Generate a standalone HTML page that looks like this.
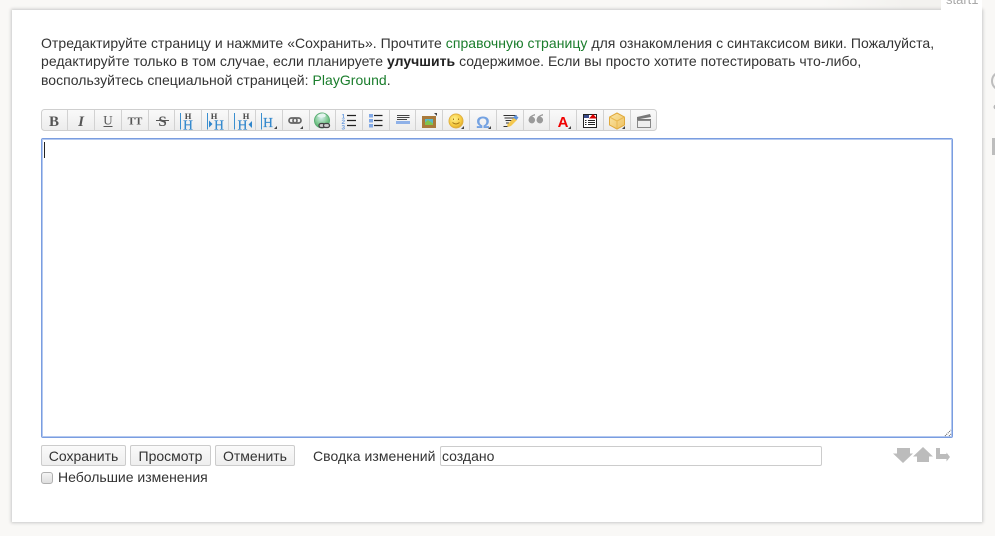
<!DOCTYPE html>
<html lang="ru"><head><meta charset="utf-8"><title>start1</title>
<style>
html,body{margin:0;padding:0}
body{width:995px;height:536px;overflow:hidden;background:#f9f8f6;position:relative;font:14px/20px "Liberation Sans",Arial,sans-serif;color:#333}
.a{position:absolute;white-space:nowrap}
#panel{left:12px;top:10px;width:970px;height:512px;background:#fff;box-shadow:0 0 3px 1px #c9c9c9}
#tab{left:941px;top:0;width:41px;height:11px;background:#fff;overflow:hidden}
#tab span{position:absolute;left:5px;top:-10px;color:#a8a8a8;font-size:13px;line-height:20px}
#tabl{left:820px;top:0;width:121px;height:10px;background:linear-gradient(to right,#f9f8f6,#f3f2ef 70%)}
.l{left:41px}
a{color:#1a7d2c;text-decoration:none}
b{color:#222}
#ta{left:41px;top:138px;width:910px;height:298px;border:1px solid #7a9de0;border-radius:2px;background:#fff;box-shadow:inset 0 0 0 1px #b4c9f0}
#caret{left:44px;top:142px;width:1px;height:16px;background:#222}
.btn{top:445px;height:19px;border:1px solid #ccc;border-radius:2px;background:linear-gradient(#fafafa,#eeeeee);text-align:center;line-height:20px;color:#333;box-sizing:content-box}
#sum{left:440px;top:446px;height:18px;border:1px solid #ccc;border-radius:2px;padding-left:1px;box-sizing:content-box;width:379px;line-height:19px;background:#fff}
#cb{left:41px;top:472px;width:10px;height:10px;border:1px solid #b0b0b0;border-radius:3px;background:linear-gradient(#f4f4f4,#dedede)}
svg{position:absolute;left:0;top:0}
</style></head><body>
<div class="a" id="tabl"></div>
<div class="a" id="panel"></div>
<div class="a" id="tab"><span>start1</span></div>

<div class="a l" style="top:33px;letter-spacing:.04px">Отредактируйте страницу и нажмите «Сохранить». Прочтите <a href="#">справочную страницу</a> для ознакомления с синтаксисом вики. Пожалуйста,</div>
<div class="a l" style="top:51px;letter-spacing:.03px">редактируйте только в том случае, если планируете <b>улучшить</b> содержимое. Если вы просто хотите потестировать что-либо,</div>
<div class="a l" style="top:70px;letter-spacing:.03px">воспользуйтесь специальной страницей: <a href="#">PlayGround</a>.</div>

<div class="a" id="ta"></div>
<div class="a" id="caret"></div>

<div class="a btn" style="left:41px;width:83px">Сохранить</div>
<div class="a btn" style="left:130px;width:79px">Просмотр</div>
<div class="a btn" style="left:215px;width:78px">Отменить</div>
<div class="a" style="left:313px;top:446px;letter-spacing:.05px">Сводка изменений</div>
<div class="a" id="sum">создано</div>
<div class="a" id="cb"></div>
<div class="a" style="left:58px;top:467px">Небольшие изменения</div>

<svg width="995" height="536" viewBox="0 0 995 536">
<defs><linearGradient id="g" x1="0" y1="0" x2="0" y2="1"><stop offset="0" stop-color="#fafafa"/><stop offset="1" stop-color="#ececec"/></linearGradient>
<radialGradient id="sm" cx=".4" cy=".35" r=".7"><stop offset="0" stop-color="#fff08a"/><stop offset=".7" stop-color="#f5c83c"/><stop offset="1" stop-color="#d9a028"/></radialGradient>
<radialGradient id="gl" cx=".45" cy=".3" r=".75"><stop offset="0" stop-color="#d8eef0"/><stop offset=".6" stop-color="#7cc88e"/><stop offset="1" stop-color="#46a862"/></radialGradient>
<linearGradient id="bx" x1="0" y1="0" x2="1" y2="1"><stop offset="0" stop-color="#fbe7a8"/><stop offset="1" stop-color="#eec060"/></linearGradient></defs>

<!-- toolbar -->
<rect x="41.5" y="109.5" width="615" height="21" rx="3" fill="url(#g)" stroke="#cfcfcf"/>
<path d="M67.5 110v20M94.5 110v20M121.5 110v20M148.5 110v20M174.5 110v20M201.5 110v20M228.5 110v20M255.5 110v20M282.5 110v20M309.5 110v20M335.5 110v20M362.5 110v20M389.5 110v20M415.5 110v20M442.5 110v20M469.5 110v20M496.5 110v20M523.5 110v20M549.5 110v20M576.5 110v20M603.5 110v20M630.5 110v20" stroke="#d2d2d2" fill="none"/>

<g font-family="Liberation Serif,serif" fill="#555">
<text x="54" y="126" font-size="15" font-weight="bold" text-anchor="middle">B</text>
<text x="81" y="126" font-size="15" font-weight="bold" font-style="italic" text-anchor="middle">I</text>
<text x="108" y="124.500" font-size="13" text-anchor="middle">U</text>
<path d="M103.500 126.500h9" stroke="#555"/>
<text x="135" y="124.500" font-size="11" font-weight="bold" text-anchor="middle">TT</text>
<text x="162.500" y="126" font-size="15" font-weight="bold" text-anchor="middle">S</text>
<path d="M156 120.500h13" stroke="#555"/>
</g>

<!-- headings -->
<g font-family="Liberation Serif,serif">
<path d="M180.500 113v16.500M207.500 113v16.500M234.500 113v16.500M261.500 113v16.500" stroke="#3a8fd0"/>
<g fill="#444" font-size="8.500" font-weight="bold" text-anchor="middle">
<text x="188" y="119">H</text><text x="214" y="119">H</text><text x="246" y="119">H</text></g>
<g fill="#2f86cc" font-size="13.500" text-anchor="middle" stroke="#2f86cc" stroke-width=".25">
<text x="188" y="129.500">H</text><text x="219" y="129.500">H</text><text x="242.500" y="129.500">H</text><text x="268" y="127">H</text></g>
<path d="M209 120.500l3.500 3.500-3.500 3.500zM252 121l-3.500 3.500 3.500 3.500z" fill="#2f86cc"/>
</g>

<!-- link -->
<g fill="none" stroke="#666" stroke-width="1.700"><rect x="289" y="118" width="8" height="5" rx="2.500"/><rect x="293" y="118" width="8" height="5" rx="2.500"/></g>
<path d="M274 129h3v-3zM300 129h3v-3z" fill="#444"/>

<!-- globe link -->
<circle cx="322" cy="120.500" r="7.500" fill="url(#gl)" stroke="#5aae74"/>
<path d="M317 116q3-3 7-2.500 3 1.500 1 3.500-5 1.500-8-1z" fill="#e4f4ee"/>
<g fill="#cfcfcf" stroke="#444" stroke-width="1.300"><rect x="319" y="123.500" width="6" height="4" rx="2"/><rect x="323.500" y="123.500" width="6" height="4" rx="2"/></g>

<!-- ol -->
<g fill="#6f9fe0" font-family="Liberation Sans,sans-serif" font-size="6.500" font-weight="bold"><text x="341.500" y="118.500">1</text><text x="341.500" y="124">2</text><text x="341.500" y="129.500">3</text></g>
<path d="M347 115.500h9M347 120.500h9M347 125.500h9" stroke="#222" stroke-width="1.300"/>
<!-- ul -->
<path d="M369 114h4v3.500h-4zM369 119h4v3.500h-4zM369 124h4v3.500h-4z" fill="#82a9e6"/>
<path d="M374 115.500h8.500M374 120.500h8.500M374 125.500h8.500" stroke="#222" stroke-width="1.300"/>
<!-- hr -->
<path d="M397 115.500h12.500M397 117.500h12.500M397 119.500h10" stroke="#444"/>
<path d="M396 122.500h14" stroke="#8fb1e8" stroke-width="3"/>

<!-- image -->
<rect x="422" y="116" width="14" height="12" fill="#a8793a"/>
<rect x="425" y="119" width="8" height="6" fill="#5ab7c9"/>
<path d="M425 125v-2.500l3-2.500 5 3.500v1.500z" fill="#82c24a"/>
<path d="M434 113h3v3z" fill="#444"/>

<!-- smiley -->
<circle cx="456" cy="121" r="7" fill="url(#sm)" stroke="#e0b040"/>
<path d="M452.500 122.500q3.500 3 7 0" stroke="#a87a18" fill="none"/>
<path d="M453.500 118.500v1.500M458.500 118.500v1.500" stroke="#a87a18"/>
<path d="M461 129h3v-3z" fill="#444"/>

<!-- omega -->
<text x="483" y="128" font-family="Liberation Sans,sans-serif" font-size="17" font-weight="bold" fill="#74a2e2" text-anchor="middle">Ω</text>
<path d="M488 129h3v-3z" fill="#444"/>

<!-- signature -->
<path d="M503.500 115.500h13M504.500 118h11M505.500 120.500h7M506 123h3M503.500 126.500h4" stroke="#333"/>
<path d="M507 125l1 2 3 -1 6 -6-3-2.500z" fill="#f4c850"/>
<path d="M513 117.500l2.500-2.500 3 2.500-2 2.500z" fill="#5f93dd"/>

<!-- quote -->
<g fill="#9a9a9a">
<path d="M535 114q-6 1.500-6.500 6a3.300 3.300 0 1 0 3.800-3.200q.4-1 2.700-1.300z"/>
<path d="M543 114q-6 1.500-6.500 6a3.300 3.300 0 1 0 3.800-3.200q.4-1 2.700-1.300z"/>
</g>

<!-- A -->
<text x="563" y="127" font-family="Liberation Sans,sans-serif" font-size="15" font-weight="bold" fill="#f00000" text-anchor="middle">A</text>
<path d="M568 129h3v-3z" fill="#444"/>

<!-- template -->
<rect x="583.500" y="114.500" width="13" height="13" fill="#fff" stroke="#222"/>
<path d="M584 115h5v3h-5z" fill="#3a4a8a"/>
<path d="M589 118.500l4-4.500 4 4.500z" fill="#d80000"/>
<path d="M585 120.500h1.500M585 122.500h1.500M585 124.500h1.500M588 120.500h7M588 122.500h7M588 124.500h7" stroke="#222"/>

<!-- box -->
<path d="M617 113l7.500 4v8l-7.500 4-7.500-4v-8z" fill="url(#bx)" stroke="#e0a93c"/>
<path d="M609.500 117l7.500 4 7.500-4M617 121v8" stroke="#e8b850" fill="none"/>
<path d="M622 129h3v-3z" fill="#444"/>

<!-- clapper -->
<rect x="637.500" y="120.500" width="13" height="7" fill="#eee" stroke="#888"/>
<path d="M637 117l13-3 1 3-14 2.500z" fill="#777"/>
<path d="M637 119.500h14" stroke="#777"/>

<!-- resize grip -->
<path d="M945 436l6-6M949 436l2-2" stroke="#555" stroke-dasharray="1 1" fill="none"/>

<!-- nav arrows -->
<g fill="#bcbcbc">
<path d="M897 448h13v5.500h3l-10 9.500-10-9.500h4z"/>
<path d="M923 447l10 9.500h-4v5.500h-12v-5.500h-4z"/>
<path d="M936 448h4v6h6.500v-1.500l3.500 4.500-3.500 4.500v-2.500h-10.500z"/>
</g>

<!-- right edge bits -->
<circle cx="1001" cy="81" r="9" fill="none" stroke="#bdbdbd" stroke-width="2"/>
<circle cx="996" cy="107" r="2.500" fill="#b5b5b5"/>
<rect x="992" y="138" width="3" height="17" fill="#bdbdbd"/>
</svg>
</body></html>
